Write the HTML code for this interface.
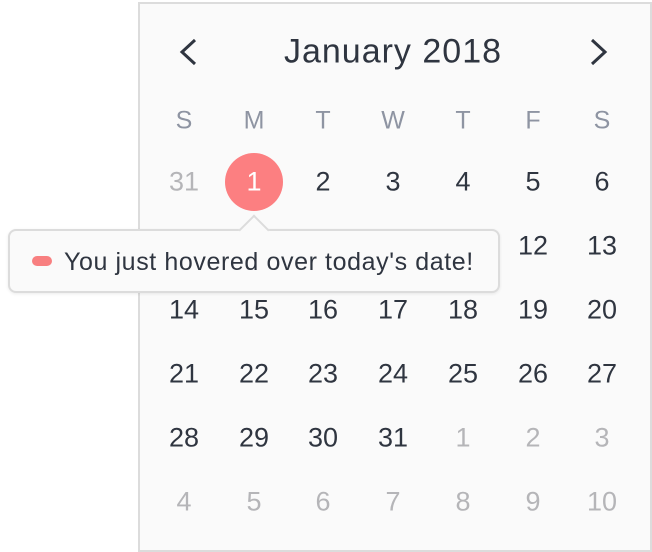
<!DOCTYPE html>
<html><head><style>
body{margin:0;width:652px;height:552px;background:#fff;font-family:"Liberation Sans",sans-serif;position:relative;overflow:hidden}
.cal{position:absolute;left:138px;top:2px;width:510px;height:546px;border:2px solid #dcdcdc;background:#fafafa;box-sizing:content-box}
.t{position:absolute;transform:translate(-50%,-50%);white-space:nowrap}
.h{font-size:34px;color:#2f3540;letter-spacing:1px}
.w{font-size:25px;color:#8e94a2}
.n{font-size:27px;color:#2f3540}
.g{color:#b5b5b8}
.circ{position:absolute;left:225px;top:153px;width:58px;height:58px;border-radius:50%;background:#fc7f81}
.tip{position:absolute;left:8px;top:229px;width:492px;height:64px;border:2px solid #dcdcdc;border-radius:8px;background:#fafafa;box-shadow:0 1px 3px rgba(0,0,0,.08);box-sizing:border-box}
.arr{position:absolute;left:243px;top:219px;width:20px;height:20px;background:#fafafa;border-left:2px solid #dcdcdc;border-top:2px solid #dcdcdc;transform:rotate(45deg)}
.pill{position:absolute;left:32px;top:256px;width:20px;height:10px;border-radius:5px;background:#f87f80}
.tt{position:absolute;left:64px;top:247px;font-size:25px;letter-spacing:0.6px;color:#2f3540;white-space:nowrap;line-height:30px}
</style></head><body>
<div class="cal"></div>
<svg style="position:absolute;left:0;top:0" width="652" height="552"><path d="M195 40 L182 52 L195 64" fill="none" stroke="#2f3540" stroke-width="3"/><path d="M592 40 L605 52 L592 64" fill="none" stroke="#2f3540" stroke-width="3"/></svg>
<div class="t h" style="left:393px;top:52px">January 2018</div>
<div id="g"></div>
<div class="circ"></div>
<div class="tip"></div>
<div class="arr"></div>
<div class="pill"></div>
<div class="tt">You just hovered over today's date!</div>
<script>
var xs=[184,254,323,393,463,533,602],g=document.getElementById('g'),h='';
'SMTWTFS'.split('').forEach(function(c,i){h+='<div class="t w" style="left:'+xs[i]+'px;top:121px">'+c+'</div>'});
var d=[31];for(var i=1;i<=31;i++)d.push(i);for(i=1;i<=10;i++)d.push(i);
d.forEach(function(v,k){var r=Math.floor(k/7),c=k%7;var gray=(k==0||k>31);var col=(k==1)?'color:#fff;z-index:2':'';
if(r==1&&c<5)return;
h+='<div class="t n'+(gray?' g':'')+'" style="left:'+xs[c]+'px;top:'+(182+r*64)+'px;'+col+'">'+v+'</div>'});
g.innerHTML=h;
</script>
</body></html>
